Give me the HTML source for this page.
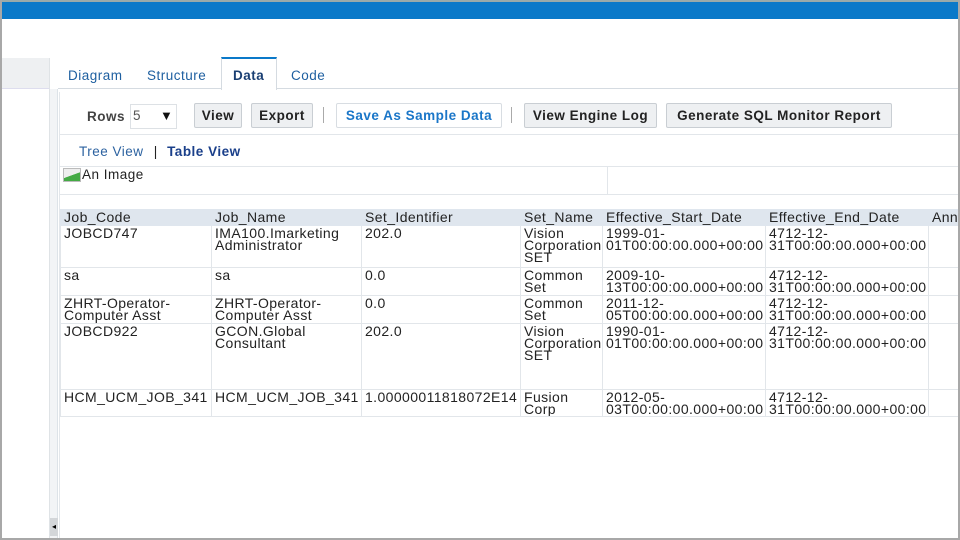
<!DOCTYPE html>
<html><head><meta charset="utf-8"><style>
*{margin:0;padding:0;box-sizing:border-box}
body{width:960px;height:540px;overflow:hidden;background:#fff;font-family:"Liberation Sans",Arial,sans-serif;position:relative;letter-spacing:0.5px}
.frame{position:absolute;left:0;top:0;width:960px;height:540px;border:2px solid #a8a8a8;border-top:none}
.blue{position:absolute;left:2px;top:0;width:956px;height:19px;background:#0a79c9;border-top:2px solid #9aa}
.lefthdr{position:absolute;left:2px;top:58px;width:47px;height:31px;background:#eef0f2;border-bottom:1px solid #dde}
.leftline{position:absolute;left:49px;top:58px;width:1px;height:480px;background:#dfe3e6}
.sb{position:absolute;left:50px;top:89px;width:8px;height:449px;background:#f2f4f6;border-right:1px solid #dde3e8}
.sbb{position:absolute;left:50px;top:518px;width:8px;height:18px;background:#d3d6d9;font-size:8px;color:#000;line-height:18px;text-align:center;letter-spacing:0}
.tabs{position:absolute;left:58px;top:88px;width:900px;height:1px;background:#d5dbe1}
.tab{position:absolute;top:68px;font-size:13.5px;color:#1e5fa0}
.tabsel{position:absolute;left:221px;top:57px;width:56px;height:33px;background:#fff;border:1px solid #d5dbe1;border-top:2px solid #0a79c9;border-bottom:none}
.panel{position:absolute;left:59px;top:92px;width:899px;height:446px;border-left:1px solid #e3e7eb}
.btn{position:absolute;top:103px;height:25px;background:#eef0f2;border:1px solid #c9ced3;font-size:13.5px;font-weight:bold;color:#222;line-height:23px;text-align:center;border-radius:2px;white-space:nowrap}
.sep{position:absolute;top:107px;width:1px;height:16px;background:#aaa}
.hl{position:absolute;background:#e2e6ea;height:1px}
.tw{position:absolute;left:60px;top:209px;width:898px;height:210px;overflow:hidden}
table{border-collapse:collapse;table-layout:fixed;font-size:14px;letter-spacing:0.4px;color:#222;line-height:12px}
td{border:1px solid #e2e6ea;vertical-align:top;padding:1px 0 0 3px;overflow:hidden;white-space:nowrap}
tr.h td{background:#dfe6ee;height:16px;padding-top:0;line-height:15px;border-color:#dfe6ee}
</style></head><body>
<div class="frame"></div>
<div class="blue"></div>
<div class="lefthdr"></div>
<div class="leftline"></div>
<div class="sb"></div><div class="sbb">◂</div>
<div class="tabs"></div>
<div class="tabsel"></div>
<div class="tab" style="left:68px">Diagram</div>
<div class="tab" style="left:147px">Structure</div>
<div class="tab" style="left:233px;font-weight:bold;color:#1a3f73">Data</div>
<div class="tab" style="left:291px">Code</div>
<div class="panel"></div>
<div style="position:absolute;left:87px;top:109px;font-size:13.5px;font-weight:bold;color:#444">Rows</div>
<div style="position:absolute;left:130px;top:104px;width:47px;height:25px;border:1px solid #dde1e5;font-size:13.5px;color:#555;padding:3px 0 0 2px">5<span style="position:absolute;left:29px;top:3px;font-size:13px;color:#111">▼</span></div>
<div class="btn" style="left:194px;width:48px">View</div>
<div class="btn" style="left:251px;width:62px">Export</div>
<div class="sep" style="left:323px"></div>
<div class="btn" style="left:336px;width:166px;background:#fff;border-color:#d8dde2;color:#1a76c8">Save As Sample Data</div>
<div class="sep" style="left:511px"></div>
<div class="btn" style="left:524px;width:133px">View Engine Log</div>
<div class="btn" style="left:666px;width:226px">Generate SQL Monitor Report</div>
<div class="hl" style="left:60px;top:134px;width:898px"></div>
<div style="position:absolute;left:79px;top:144px;font-size:13.5px;color:#2c62a0">Tree View <span style="color:#222;margin:0 5px 0 6px">|</span> <b style="color:#1a3f8a">Table View</b></div>
<div class="hl" style="left:60px;top:166px;width:898px"></div>
<div class="hl" style="left:60px;top:194px;width:898px"></div>
<div style="position:absolute;left:607px;top:166px;width:1px;height:29px;background:#e2e6ea"></div>
<div style="position:absolute;left:63px;top:168px;width:18px;height:14px;border:1px solid #bbb;background:linear-gradient(160deg,#eee 50%,#4a4 52%)"></div>
<div style="position:absolute;left:82px;top:167px;font-size:13.5px;color:#222">An Image</div>
<div class="tw">
<table style="width:950px">
<colgroup><col style="width:151px"><col style="width:150px"><col style="width:159px"><col style="width:82px"><col style="width:163px"><col style="width:163px"><col style="width:82px"></colgroup>
<tr class="h"><td>Job_Code</td><td>Job_Name</td><td>Set_Identifier</td><td>Set_Name</td><td>Effective_Start_Date</td><td>Effective_End_Date</td><td>Ann</td></tr>
<tr style="height:42px"><td>JOBCD747</td><td>IMA100.Imarketing<br>Administrator</td><td>202.0</td><td>Vision<br>Corporation<br>SET</td><td>1999-01-<br>01T00:00:00.000+00:00</td><td>4712-12-<br>31T00:00:00.000+00:00</td><td></td></tr>
<tr style="height:28px"><td>sa</td><td>sa</td><td>0.0</td><td>Common<br>Set</td><td>2009-10-<br>13T00:00:00.000+00:00</td><td>4712-12-<br>31T00:00:00.000+00:00</td><td></td></tr>
<tr style="height:28px"><td>ZHRT-Operator-<br>Computer Asst</td><td>ZHRT-Operator-<br>Computer Asst</td><td>0.0</td><td>Common<br>Set</td><td>2011-12-<br>05T00:00:00.000+00:00</td><td>4712-12-<br>31T00:00:00.000+00:00</td><td></td></tr>
<tr style="height:66px"><td>JOBCD922</td><td>GCON.Global<br>Consultant</td><td>202.0</td><td>Vision<br>Corporation<br>SET</td><td>1990-01-<br>01T00:00:00.000+00:00</td><td>4712-12-<br>31T00:00:00.000+00:00</td><td></td></tr>
<tr style="height:27px"><td>HCM_UCM_JOB_341</td><td>HCM_UCM_JOB_341</td><td>1.00000011818072E14</td><td>Fusion<br>Corp</td><td>2012-05-<br>03T00:00:00.000+00:00</td><td>4712-12-<br>31T00:00:00.000+00:00</td><td></td></tr>
</table>
</div>
</body></html>
